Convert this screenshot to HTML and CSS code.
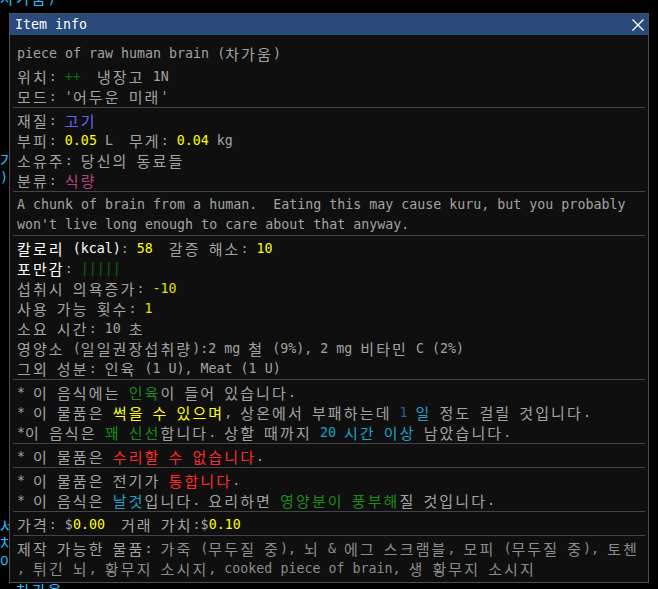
FILE: index.html
```html
<!DOCTYPE html>
<html lang="ko">
<head>
<meta charset="utf-8">
<title>Item info</title>
<link rel="stylesheet" href="styles.css">
</head>
<body>
<div class="desk">
  <div class="frag f-top"><span class="k">차가움</span>)</div>
  <div class="frag f-ga"><span class="k">가</span></div>
  <div class="frag f-par">)</div>
  <div class="frag f-seo"><span class="k">서</span></div>
  <div class="frag f-cha"><span class="k">차</span></div>
  <div class="frag f-a"><span class="k">아</span></div>
  <div class="frag f-bot">- <span class="k">차가움</span></div>
</div>
<div class="win">
  <div class="title">
    <span class="title-text">Item info</span>
    <span class="close"><svg width="16" height="16" viewBox="0 0 16 16"><path d="M2.5 2.5L13.5 13.5M13.5 2.5L2.5 13.5" stroke="#ffffff" stroke-width="1.3" fill="none"/></svg></span>
  </div>
  <div class="body">
    <div class="sec head">
      <div class="ln name">piece of raw human brain (<span class="k">차가움</span>)</div>
      <div class="ln"><span class="k">위치</span>: <span class="dg">++</span>  <span class="k">냉장고</span> 1N</div>
      <div class="ln"><span class="k">모드</span>: '<span class="k">어두운 미래</span>'</div>
    </div>
    <div class="sep"></div>
    <div class="sec">
      <div class="ln"><span class="k">재질</span>: <span class="k lb">고기</span></div>
      <div class="ln"><span class="k">부피</span>: <span class="y">0.05</span> L  <span class="k">무게</span>: <span class="y">0.04</span> kg</div>
      <div class="ln"><span class="k">소유주</span>: <span class="k">당신의 동료들</span></div>
      <div class="ln"><span class="k">분류</span>: <span class="k pk">식량</span></div>
    </div>
    <div class="sep"></div>
    <div class="sec">
      <div class="ln">A chunk of brain from a human.  Eating this may cause kuru, but you probably</div>
      <div class="ln">won't live long enough to care about that anyway.</div>
    </div>
    <div class="sep"></div>
    <div class="sec">
      <div class="ln"><span class="w"><span class="k">칼로리</span> (kcal)</span>: <span class="y">58</span>  <span class="k">갈증 해소</span>: <span class="y">10</span></div>
      <div class="ln"><span class="k w">포만감</span>: <span class="dg">|||||</span></div>
      <div class="ln"><span class="k">섭취시 의욕증가</span>: <span class="y2">-10</span></div>
      <div class="ln"><span class="k">사용 가능 횟수</span>: <span class="y2">1</span></div>
      <div class="ln"><span class="k">소요 시간</span>: 10 <span class="k">초</span></div>
      <div class="ln"><span class="k">영양소</span> (<span class="k">일일권장섭취량</span>):2 mg <span class="k">철</span> (9%), 2 mg <span class="k">비타민</span> C (2%)</div>
      <div class="ln"><span class="k">그외 성분</span>: <span class="k">인육</span> (1 U), Meat (1 U)</div>
    </div>
    <div class="sep"></div>
    <div class="sec">
      <div class="ln">* <span class="k">이 음식에는</span> <span class="k gr">인육</span><span class="k">이 들어 있습니다</span>.</div>
      <div class="ln">* <span class="k">이 물품은</span> <span class="k y">썩을 수 있으며</span>, <span class="k">상온에서 부패하는데</span> <span class="bl">1</span> <span class="k cy">일</span> <span class="k">정도 걸릴 것입니다</span>.</div>
      <div class="ln">*<span class="k">이 음식은</span> <span class="k gr">꽤 신선</span><span class="k">합니다</span>. <span class="k">상할 때까지</span> <span class="cy">20 <span class="k">시간 이상</span></span> <span class="k">남았습니다</span>.</div>
    </div>
    <div class="sep"></div>
    <div class="sec">
      <div class="ln">* <span class="k">이 물품은</span> <span class="k rd">수리할 수 없습니다</span>.</div>
    </div>
    <div class="sep"></div>
    <div class="sec">
      <div class="ln">* <span class="k">이 물품은 전기가</span> <span class="k rd">통합니다</span>.</div>
      <div class="ln">* <span class="k">이 음식은</span> <span class="k cy">날것</span><span class="k">입니다</span>. <span class="k">요리하면</span> <span class="k gr">영양분이 풍부해</span><span class="k">질 것입니다</span>.</div>
    </div>
    <div class="sep"></div>
    <div class="sec">
      <div class="ln"><span class="k">가격</span>: $<span class="y">0.00</span>  <span class="k">거래 가치</span>:$<span class="y">0.10</span></div>
    </div>
    <div class="sep"></div>
    <div class="sec last">
      <div class="ln"><span class="k">제작 가능한 물품</span>: <span class="dk"><span class="k">가죽</span> (<span class="k">무두질 중</span>), <span class="k">뇌</span> &amp; <span class="k">에그 스크램블</span>, <span class="k">모피</span> (<span class="k">무두질 중</span>), <span class="k">토첸</span></span></div>
      <div class="ln dk">, <span class="k">튀긴 뇌</span>, <span class="k">황무지 소시지</span>, cooked piece of brain, <span class="k">생 황무지 소시지</span></div>
    </div>
  </div>
</div>
</body>
</html>
```

FILE: styles.css
```css
html, body {
  margin: 0;
  background: #000000;
}
body {
  padding: 13px 0 0 9px;
  height: 589px;
  box-sizing: border-box;
  overflow: hidden;
  font-family: "DejaVu Sans Mono", monospace;
  font-size: 13.3px;
  color: #a3a3a3;
}
.k {
  font-family: "DejaVu Sans Mono", "Noto Sans CJK KR", sans-serif;
  font-size: 15px;
  letter-spacing: 2.12px;
  word-spacing: -3.15px;
  vertical-align: -2px;
}
.desk {
  position: absolute;
  left: 0;
  top: 0;
  width: 658px;
  height: 589px;
  z-index: 0;
}
.frag {
  position: absolute;
  left: 0;
  color: #22c4ff;
  line-height: 14px;
  height: 14px;
  white-space: pre;
  overflow: hidden;
}
.frag .k {
  vertical-align: 0;
}
.f-top { top: -8px; width: 60px; }
.f-ga { top: 154px; width: 9px; }
.f-par { top: 171px; width: 9px; }
.f-seo { top: 520px; width: 9px; }
.f-cha { top: 537px; width: 9px; }
.f-a { top: 555px; width: 9px; }
.f-bot { top: 584px; width: 60px; }

.win {
  position: relative;
  z-index: 1;
  width: 640px;
  height: 570px;
  box-sizing: border-box;
  border: 1px solid #4e4e5c;
  background: #0f0f0f;
}
.title {
  height: 21px;
  background: #294a7a;
  display: flex;
  align-items: center;
  justify-content: space-between;
  padding: 0 2px 0 5px;
}
.title-text {
  color: #ffffff;
  line-height: 21px;
  white-space: pre;
}
.close {
  width: 16px;
  height: 16px;
  display: flex;
}
.body {
  padding: 0 3px;
}
.sep {
  height: 1px;
  background: #43434e;
}
.sec {
  padding: 3px 4px 0 4px;
}
.sec.head {
  padding-top: 9px;
}
.sec.last {
  padding-bottom: 3px;
}
.ln {
  height: 20px;
  line-height: 20px;
  white-space: pre;
  overflow: hidden;
}
.name {
  margin-bottom: 3px;
}
.w { color: #ffffff; }
.y { color: #ffff00; }
.y2 { color: #e2e200; }
.lb { color: #6464ff; }
.pk { color: #b8407f; }
.dg { color: #0b6a0b; }
.gr { color: #1a8c1a; }
.cy { color: #1ea0c8; }
.bl { color: #2e5c9c; }
.rd { color: #ff2a2a; }
.dk { color: #8c8c8c; }
```
